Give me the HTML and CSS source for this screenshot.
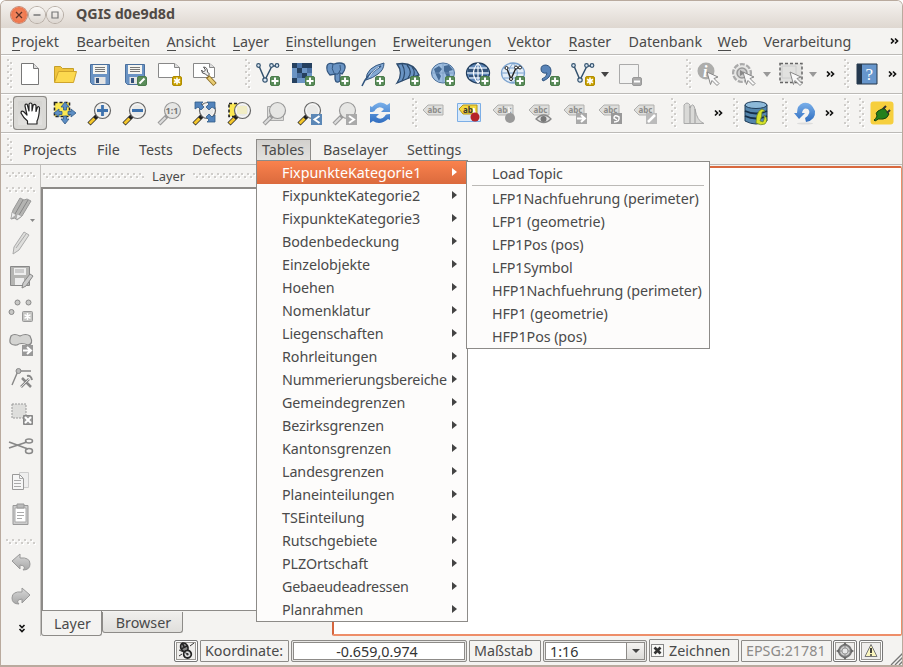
FILE: index.html
```html
<!DOCTYPE html>
<html lang="de">
<head>
<meta charset="utf-8">
<title>QGIS d0e9d8d</title>
<link rel="stylesheet" href="styles.css">
</head>
<body>
<svg class="defs" width="0" height="0" aria-hidden="true">
<defs>
<linearGradient id="gBlue" x1="0" y1="0" x2="0" y2="1"><stop offset="0" stop-color="#7ab0ea"/><stop offset="1" stop-color="#2f6dc0"/></linearGradient>
<linearGradient id="gGrey" x1="0" y1="0" x2="0" y2="1"><stop offset="0" stop-color="#d8d8d8"/><stop offset="1" stop-color="#a8a8a8"/></linearGradient>
<g id="plus"><rect x="14.500" y="14.500" width="9" height="9" rx="1.500" fill="#5a8c5a" stroke="#4a7c4a"/><path d="M19 15.500v7M15.500 19h7" stroke="#fff" stroke-width="2"/></g>
<g id="star"><rect x="14.500" y="14.500" width="9" height="9" rx="1.500" fill="#c9a100" stroke="#b08c00"/><path d="M19 15.500v7M16 17.300l6 3.400M22 17.300l-6 3.400" stroke="#fff" stroke-width="1.600"/></g>
<g id="floppy"><path d="M2.500 2.500h19v20h-17l-2-2z" fill="#6a93c4" stroke="#4a6f9c"/><rect x="5" y="3" width="14" height="9" fill="#f4f4f0"/><path d="M7 5.500h10M7 7.500h10M7 9.500h10" stroke="#777"/><rect x="6.500" y="15" width="11" height="7" fill="#e4e4e4"/><rect x="8" y="16" width="3" height="5" fill="#345078"/></g>
<g id="lens"><path d="M1 23l8-8" stroke="#222" stroke-width="4.500"/><path d="M1.500 22.500l5-5" stroke="#f4c62c" stroke-width="3"/><circle cx="14.500" cy="9.500" r="8" fill="#e9e9e7" stroke="#666" stroke-width="1.200"/><circle cx="14.500" cy="9.500" r="6.300" fill="none" stroke="#f8f8f8"/></g>
<g id="lensgrey"><path d="M1 23l8-8" stroke="#999" stroke-width="4.200"/><path d="M1.500 22.500l6-6" stroke="#ddd" stroke-width="2"/><circle cx="14.500" cy="9.500" r="8" fill="#e6e6e4" stroke="#999" stroke-width="1.200"/></g>
<g id="tag"><path d="M1 9l5-5h15v10h-15z" fill="#dededc" stroke="#b0b0ae"/><text x="5.500" y="12.400" class="tagtext">abc</text></g>
<g id="vee" fill="none" stroke="#34536f" stroke-width="1.500"><path d="M3 4l6 14 7-14h4"/><g fill="#dce8f4" stroke-width="1.200"><circle cx="2.500" cy="3.500" r="1.800"/><circle cx="9" cy="18" r="2.200"/><circle cx="15.500" cy="3.500" r="1.800"/><circle cx="21" cy="3.500" r="1.800"/></g></g>
<g id="cursor"><path d="M11 10l11 5-4 1.500 5 5-2 2-5-5-1.500 4z" fill="#f8f8f8" stroke="#888"/></g>
<g id="chev" fill="none" stroke="#111" stroke-width="1.700"><path d="M1 1.500l2.500 2.500-2.500 2.500M5 1.500l2.500 2.500-2.500 2.500"/></g>
</defs>
</svg>

<div class="window">
  <header class="titlebar">
    <span class="wbtn close"><svg width="16" height="16"><path d="M5 5l6 6M11 5l-6 6" stroke="#5e3226" stroke-width="1.300"/></svg></span>
    <span class="wbtn"><svg width="16" height="16"><path d="M4.500 8h7" stroke="#777" stroke-width="1.300"/></svg></span>
    <span class="wbtn"><svg width="16" height="16"><path d="M5 5h6v6h-6z" fill="none" stroke="#777" stroke-width="1.200"/></svg></span>
    <h1>QGIS d0e9d8d</h1>
  </header>

  <nav class="menubar">
    <span><u>P</u>rojekt</span><span><u>B</u>earbeiten</span><span><u>A</u>nsicht</span><span><u>L</u>ayer</span><span><u>E</u>instellungen</span><span><u>E</u>rweiterungen</span><span><u>V</u>ektor</span><span><u>R</u>aster</span><span>Datenbank</span><span><u>W</u>eb</span><span>Verarbeitung</span>
    <svg width="9" height="8"><use href="#chev"/></svg>
  </nav>

  <div class="toolbar">
    <i class="grip"></i>
    <div class="tools">
      <svg><path d="M3.500 1.500h12l5 5v16h-17z" fill="#fff" stroke="#777"/><path d="M15.500 1.500v5h5" fill="#ddd" stroke="#777"/></svg>
      <svg><path d="M1.500 20V4.500h6l2 2h11v4" fill="#f0c43c" stroke="#c59f28"/><path d="M1.500 20.500l4-11h18l-3 11z" fill="#fcd94f" stroke="#cfa42c"/></svg>
      <svg><use href="#floppy"/></svg>
      <svg><use href="#floppy"/><rect x="14.500" y="14.500" width="9" height="9" rx="1.500" fill="#5a8c5a" stroke="#4a7c4a"/><path d="M16.500 21.500l5-5" stroke="#fff" stroke-width="2"/></svg>
      <svg><path d="M.5 1.500h16l5 4v10h-21z" fill="#fff" stroke="#888"/><path d="M16.500 1.500v4h5" fill="#ddd" stroke="#888"/><use href="#star"/></svg>
      <svg><path d="M.5 1.500h16l5 4v10h-21z" fill="#fff" stroke="#888"/><path d="M16.500 1.500v4h5" fill="#ddd" stroke="#888"/><path d="M8.500 8q0 4 4 4l2 2 2-2-2-2q0-5-4-5l2 3-2 2z" fill="#eee" stroke="#555"/><path d="M14.500 14.500l7.500 8" stroke="#8a6c24" stroke-width="4.600"/><path d="M15.500 15.500l6 6.500" stroke="#e8cc74" stroke-width="2.800"/></svg>
    </div>
    <i class="grip g-add"></i>
    <div class="tools">
      <svg><use href="#vee"/><use href="#plus"/></svg>
      <svg><path d="M1 1h20v20H1z" fill="#6b94c4"/><path d="M1 1h5v5H1zM11 1h10v5H11zM6 6h5v5H6zM1 16h5v5H1zM11 11h5v5h-5z" fill="#25405f"/><path d="M6 1h5v5H6zM16 6h5v5h-5zM6 11h5v5H6z" fill="#4a71a3"/><use href="#plus"/></svg>
      <svg><path d="M1 4Q2 0 8 2q6-2 10 0 3 4-2 10l-2-1v8q-4 3-5-2v-5l-5 1Q0 9 1 4z" fill="#6a94c4" stroke="#33567f" stroke-width="1.300"/><path d="M7 2q-2 5 1 9M14 3q2 5-2 9h-4" fill="none" stroke="#33567f"/><use href="#plus"/></svg>
      <svg><path d="M5 18Q5 5 23 1q0 7-6 11-5 4-12 6z" fill="#84a9d4" stroke="#33567f"/><path d="M1 24Q5 13 20 4" fill="none" stroke="#33567f" stroke-width="1.500"/><path d="M8 15q3-6 10-10" stroke="#dbe7f4" fill="none"/><use href="#plus"/></svg>
      <svg><path d="M1 2q16-3 22 11l-10 3-12 5q7-10 0-19z" fill="#6a94c4" stroke="#2c4a6c" stroke-width="1.300"/><path d="M6 2q5 9 0 17M11 3q6 7 1 13M16 5q4 5 1 10" fill="none" stroke="#2c4a6c" stroke-width="1.200"/><use href="#plus"/></svg>
      <svg><ellipse cx="12" cy="11" rx="11.500" ry="10" fill="#9dbddf" stroke="#4c719c"/><path d="M3 7l5-3 3 3-3 4 2 3-2 5-3-6zM13 4l5-1 4 5-4 1 1 5-3 1-3-6z" fill="#456b96"/><path d="M1 11h22M12 1v20" stroke="#7295bd" stroke-width=".7"/><use href="#plus"/></svg>
      <svg><ellipse cx="12" cy="11" rx="11.500" ry="10" fill="#5d87b8" stroke="#233f5f" stroke-width="1.300"/><path d="M2 7h20v3H2zM3 13h18v2H3z" fill="#233f5f" opacity=".7"/><path d="M1 11h22M3 6h18M3 16h18M12 1v20M12 1q-9 10 0 20M12 1q9 10 0 20" fill="none" stroke="#fff" stroke-width="1.100"/><use href="#plus"/></svg>
      <svg><ellipse cx="12" cy="11" rx="11.500" ry="10" fill="#e3edf7" stroke="#7ca3cf" stroke-width="1.300"/><path d="M1 11h22M3 6h18M3 16h18M12 1q-9 10 0 20M12 1q9 10 0 20" fill="none" stroke="#7ca3cf"/><path d="M6 7l4 10 5-11h4" fill="none" stroke="#222" stroke-width="1.400"/><g fill="#fff" stroke="#222"><circle cx="5.500" cy="6" r="1.500"/><circle cx="10" cy="17" r="1.500"/><circle cx="15" cy="5.500" r="1.500"/><circle cx="19" cy="5.500" r="1.500"/></g><use href="#plus"/></svg>
      <svg><path d="M6 17q5-2 5-6-6 1-6-4 0-4 5-4 5 1 5 6 0 7-8 10z" fill="#5984b8" stroke="#2f5480"/><use href="#plus"/></svg>
      <svg><use href="#vee"/><use href="#star"/></svg>
    </div>
    <b class="drop d-vector"></b>
    <svg class="t-remove"><path d="M1.500 2.500h19v19h-19z" fill="#f3f3f2" stroke="#aaa"/><rect x="14.500" y="15.500" width="9" height="8" rx="1.500" fill="#aaa" stroke="#999"/><path d="M16 19.500h6" stroke="#fff" stroke-width="2"/></svg>
    <i class="grip g-info"></i>
    <div class="tools info-tools">
      <svg><circle cx="10" cy="9" r="8.500" fill="#adadab"/><text x="7" y="15" class="info">i</text><use href="#cursor"/></svg>
      <svg><circle cx="10" cy="11" r="8.800" fill="#eee" stroke="#aaa" stroke-width="2.500" stroke-dasharray="5 1.500"/><circle cx="10" cy="11" r="7.600" fill="#e6e6e4"/><circle cx="10" cy="11" r="5" fill="#ccc" stroke="#999" stroke-width="1.500"/><path d="M8 8l5 3-5 3z" fill="#888"/><use href="#cursor"/></svg>
    </div>
    <b class="drop grey d-action"></b>
    <svg class="t-select"><path d="M1 1.500h22v19H1z" fill="#e1e1df" stroke="#666" stroke-width="1.500" stroke-dasharray="3 2"/><path d="M3 4h14v12H3z" fill="none" stroke="#ccc"/><use href="#cursor"/></svg>
    <b class="drop grey d-select"></b>
    <svg class="more m-1"><use href="#chev"/></svg>
    <i class="grip g-help"></i>
    <svg class="t-help"><path d="M2 2h20v20H2z" fill="#6796cc" stroke="#25364a"/><path d="M2 2h5v20H2z" fill="#24384e"/><text x="10.500" y="17.500" class="question">?</text></svg>
    <svg class="more m-2"><use href="#chev"/></svg>
  </div>

  <div class="toolbar">
    <i class="grip"></i>
    <div class="tools">
      <svg class="pressed" viewBox="0 0 24 24"><path d="M9.500 23v-3q-4-3-6.500-8 0-2.500 2.500-1.500L9 14 7 5q0-2.500 2.200-1.700L11 10V3q1.500-2 3 0v7l1.200-6q1.800-1.500 2.800.5v6L19.500 6q2-1 2 1.500-.5 9-2.500 12.500V23z" fill="#fff" stroke="#222" stroke-width="1.200" stroke-linejoin="round"/></svg>
      <svg><path d="M1.500 1.500h15v14h-15z" fill="#fbe851" stroke="#222" stroke-width="1.600" stroke-dasharray="3 2"/><path d="M12 1l4 5h-2.500v3h-3V6H8zM12 23l4-5h-2.500v-3h-3v3H8zM1 12l5-4v2.500h3v3H6V16zM23 12l-5-4v2.500h-3v3h3V16z" fill="#5d8ec4" stroke="#315a87" stroke-width=".8"/></svg>
      <svg><use href="#lens"/><path d="M14.500 4v11M9 9.500h11" stroke="#3d72ae" stroke-width="2.800"/></svg>
      <svg><use href="#lens"/><path d="M9 9.500h11" stroke="#3d72ae" stroke-width="2.800"/></svg>
      <svg><use href="#lensgrey"/><text x="7.500" y="13" class="ratio">1:1</text></svg>
      <svg><use href="#lens"/><path d="M2 1h8L8 3l3 3-3 3-3-3-3 2zM22 1h-8l2 2-3 3 3 3 3-3 3 2zM22 21h-8l2-2-3-3 3-3 3 3 3-2z" fill="#5384bc" stroke="#315a87" stroke-width=".8"/></svg>
      <svg><path d="M1 2.500h14v13H1z" fill="#fbe851" stroke="#222" stroke-width="1.600" stroke-dasharray="3 2"/><use href="#lens"/><path d="M9 5h10v8H9z" fill="#f3edbd" opacity=".8"/></svg>
      <svg><path d="M4.500 5.500h16v14h-16z" fill="#dededc" stroke="#aaa"/><use href="#lensgrey"/></svg>
      <svg><use href="#lens"/><path d="M13 13h11v11H13z" fill="#5c88b7"/><path d="M21.500 15l-5 3.500 5 3.500" stroke="#fff" stroke-width="2" fill="none"/></svg>
      <svg><use href="#lensgrey"/><path d="M13 13h11v11H13z" fill="#aaa"/><path d="M16 15l5 3.500-5 3.500" stroke="#fff" stroke-width="2" fill="none"/></svg>
      <svg><path d="M2 11V5l2 1q8-8 15-2l3-2v9h-9l3-3q-5-4-9 1 0 2-5 2zM22 13v6l-2-1q-8 7-15 2l-3 2v-9h9l-3 3q5 4 9-1 0-2 5-2z" fill="url(#gBlue)"/></svg>
    </div>
    <i class="grip g-label"></i>
    <div class="tools label-tools">
      <svg><use href="#tag"/></svg>
      <svg><path d="M.5 2.500h23v18H.5z" fill="#d8e9fa" stroke="#7caee6"/><path d="M2 8l4-4h14v9H6z" fill="#f5d83c" stroke="#b2951d"/><text x="6" y="11.500" class="tagtext dark">ab</text><path d="M16 12V7q2-1 2 2l1 4z" fill="#fff"/><circle cx="18" cy="16" r="4.500" fill="#b5252a"/></svg>
      <svg><use href="#tag"/><path d="M16 13V6q3-1 2 7z" fill="#f4f4f4"/><circle cx="18" cy="17" r="5" fill="#999"/></svg>
      <svg><use href="#tag"/><path d="M8 18q8-8 15 0-7 7-15 0z" fill="#e4e4e4" stroke="#888" stroke-width="1.300"/><circle cx="15.500" cy="18" r="3" fill="#777"/></svg>
      <svg><use href="#tag"/><path d="M13 12h11v11H13z" fill="#aaa"/><path d="M14 17.500h7M18 14l4 3.500-4 3.500" fill="none" stroke="#fff" stroke-width="2"/></svg>
      <svg><use href="#tag"/><path d="M13 12h11v11H13z" fill="#999"/><path d="M16 21q6 0 5-5-5-3-5 1l3 2" fill="none" stroke="#fff" stroke-width="1.500"/></svg>
      <svg><use href="#tag"/><path d="M13 12h11v11H13z" fill="#bbb"/><path d="M15 21l7-7" fill="none" stroke="#fff" stroke-width="2.500"/></svg>
    </div>
    <i class="grip g-hist"></i>
    <svg class="t-hist"><path d="M2 22.500V4q3-4 6 0v3q3-7 5 1 2 12 9 14.500z" fill="#d9d9d7" stroke="#aaa"/><path d="M8 22V5M13 22V8" stroke="#999"/></svg>
    <svg class="more m-3"><use href="#chev"/></svg>
    <i class="grip g-db"></i>
    <svg class="t-db"><path d="M1 4v16q11 6 22 0V4z" fill="#5586ad" stroke="#1f3c59"/><ellipse cx="12" cy="4" rx="11" ry="3.500" fill="#8db9d9" stroke="#1f3c59"/><path d="M1 10q11 5 22 0M1 15q11 5 22 0" fill="none" stroke="#152f49" stroke-width="1.800"/><path d="M12 22q0-8 3-12l3-2 3 2-3 1q0 5-2 9l3 1q2-3 1-7 5 4 1 9-4 2-9-1z" fill="#d7e22a" stroke="#658022" stroke-width=".7"/></svg>
    <i class="grip g-undo"></i>
    <svg class="t-undo"><path d="M1 12l5 6 6-6H9q1-6 6-4 4 4-3 9l1 4q10-2 9-11Q18 0 10 2 4 4 4 12z" fill="url(#gBlue)"/><ellipse cx="12" cy="22.500" rx="8" ry="1" fill="#ddd"/></svg>
    <svg class="more m-4"><use href="#chev"/></svg>
    <i class="grip g-a"></i><i class="grip g-b"></i>
    <svg class="t-plug"><rect x=".5" y=".5" width="23" height="23" rx="3" fill="#f6cf3e"/><path d="M4 19q2-1 3-4-2-3 1-5l6-3 5 6q-2 5-6 5-5-1-8 2z" fill="#23801c" stroke="#12420e"/><path d="M13 8l3-3M17 12l3-3" stroke="#333" stroke-width="2"/></svg>
  </div>

  <nav class="pluginbar">
    <i class="grip"></i>
    <span>Projects</span><span>File</span><span>Tests</span><span>Defects</span><span class="open">Tables</span><span>Baselayer</span><span>Settings</span>
  </nav>

  <main>
    <aside>
      <i class="hgrip"></i><i class="hgrip second"></i>
      <div class="vtools">
        <svg><path d="M2 22l2-9L11 1l4 2 3-1 4 2-9 15-5 4-2-2z" fill="#b4b4b2" stroke="#999"/><path d="M6 17L14 3M10 18L19 3" stroke="#888"/><path d="M2 22l1-7 4 3zM7 23l1-6 5 2z" fill="#eee" stroke="#999" stroke-width=".6"/><path d="M21 22h5l-2.500 3z" fill="#888"/></svg>
        <svg><path d="M4 23l1-7L15 1l5 3L10 19z" fill="#dededc" stroke="#aaa"/><path d="M7 17L17 3" stroke="#aaa"/></svg>
        <svg><path d="M1.500 1.500h19v19h-19z" fill="#b5b5b3" stroke="#888"/><path d="M5 3h12v7H5zM6 13h9v7H6z" fill="#eee"/><path d="M6 5h9M6 7h9" stroke="#aaa"/><path d="M13 23l1-5 7-9 3 2-7 10z" fill="#ccc" stroke="#888"/></svg>
        <svg><g fill="#c8c8c6" stroke="#888"><circle cx="8.500" cy="3.500" r="2.500"/><circle cx="19.500" cy="3.500" r="2.500"/><circle cx="2.500" cy="13" r="2.500"/></g><rect x="13.500" y="12.500" width="10" height="10" rx="1" fill="#c4c4c2" stroke="#999"/><path d="M18.500 14v7M15.500 15.700l6 3.600M21.500 15.700l-6 3.600" stroke="#fff" stroke-width="1.500"/></svg>
        <svg><path d="M2 3q3-3 9 0 6-3 10 0 4 8-2 9-7-3-11 0-10 1-6-9z" fill="#d4d4d2" stroke="#888" stroke-width="1.200"/><path d="M13 12h11v11H13z" fill="#999"/><path d="M14 17.500h7M18 14l4 3.500-4 3.500" fill="none" stroke="#fff" stroke-width="2"/></svg>
        <svg><path d="M3 18L9 4h13" fill="none" stroke="#888" stroke-width="1.400"/><circle cx="9.500" cy="4" r="2.500" fill="#bbb" stroke="#888"/><path d="M12 20l8-8M13 11l9 9" stroke="#888" stroke-width="2.500"/><path d="M12 20l8-8" stroke="#ddd"/><path d="M18 9q4-1 5 4" stroke="#888" stroke-width="2" fill="none"/></svg>
        <svg><path d="M3 3h14v14H3z" fill="#dededc" stroke="#999" stroke-dasharray="2 1"/><path d="M14.500 14.500h9v9h-9z" fill="#999" stroke="#888"/><path d="M16 16l6 6M22 16l-6 6" stroke="#fff" stroke-width="2"/></svg>
        <svg><path d="M0 7l19 7M0 13l18-6" stroke="#888" stroke-width="1.700"/><g fill="none" stroke="#888" stroke-width="1.500"><ellipse cx="20" cy="6" rx="3.500" ry="2"/><ellipse cx="20" cy="16" rx="3.500" ry="2.500"/></g></svg>
        <svg><path d="M10.500 3.500h9v15h-9z" fill="#eee" stroke="#ccc"/><path d="M3.500 5.500h7l4 4v11h-11z" fill="#f6f6f6" stroke="#999"/><path d="M10.500 5.500v4h4M5 11.500h7M5 14.500h7M5 17.500h7" fill="none" stroke="#aaa"/></svg>
        <svg><path d="M4 2.500h15v19H4z" fill="#ccc" stroke="#999"/><path d="M6 5h11v14H6z" fill="#fff" stroke="#aaa"/><path d="M8 1h7v4H8z" fill="#bbb" stroke="#999"/><path d="M8 9.500h7M8 12.500h7M8 15.500h5" stroke="#aaa"/></svg>
      </div>
      <i class="hgrip third"></i>
      <div class="vtools history">
        <svg><path d="M3 10l8-7v4q10-1 10 6 0 6-7 6 4-4-3-5v4z" fill="url(#gGrey)" stroke="#999"/></svg>
        <svg><path d="M21 10l-8-7v4Q3 6 3 13q0 6 7 6-4-4 3-5v4z" fill="url(#gGrey)" stroke="#999"/></svg>
      </div>
      <svg class="down" viewBox="0 0 8 9"><path d="M1.500 1l2.500 2.500L6.500 1M1.500 5l2.500 2.500L6.500 5" fill="none" stroke="#111" stroke-width="1.600"/></svg>
    </aside>
    <section class="dock">
      <header><i class="hgrip"></i><h2>Layer</h2><i class="hgrip"></i></header>
      <div class="tree"></div>
      <div class="tabs"><span class="active">Layer</span><span>Browser</span></div>
    </section>
    <section class="canvas"></section>
  </main>

  <footer>
    <span class="sbtn mouse"><svg width="20" height="19"><g transform="rotate(-25 10 10)"><ellipse cx="10" cy="6" rx="3.500" ry="4.500" fill="#888" stroke="#222" stroke-width="1.700"/><path d="M6 6h8M10 1v5" stroke="#222" stroke-width="1.500"/><circle cx="10" cy="13.500" r="3.800" fill="#ddd" stroke="#222" stroke-width="1.800"/><circle cx="10" cy="13.500" r="1.200" fill="#333"/></g><path d="M3 9l9 4M14 5l4-3M3 15l3-2" stroke="#333"/></svg></span>
    <span class="box coord">Koordinate:</span>
    <span class="field value">-0.659,0.974</span>
    <span class="box scale">Maßstab</span>
    <span class="field combo">1:16<em><b class="drop"></b></em></span>
    <span class="box render"><svg width="13" height="13"><rect x=".5" y=".5" width="12" height="12" fill="#f8f8f6" stroke="#888"/><path d="M3.500 3.500l6 6M9.500 3.500l-6 6" stroke="#333" stroke-width="2.700"/></svg>Zeichnen</span>
    <span class="box epsg">EPSG:21781</span>
    <span class="sbtn crs"><svg width="18" height="18"><circle cx="9" cy="9" r="6" fill="#ccc" stroke="#777" stroke-width="2"/><path d="M9 2v14M2 9h14" stroke="#888"/><circle cx="9" cy="9" r="3" fill="#e8e8e8" stroke="#999"/><path d="M9 0l2 3H7zM9 18l2-3H7zM0 9l3-2v4zM18 9l-3-2v4z" fill="#666"/></svg></span>
    <span class="sbtn warn"><svg width="18" height="18"><path d="M9 2.500l6 12H3z" fill="#fbf6bd" stroke="#777" stroke-linejoin="round"/><path d="M9 6v5M9 12.200v1.500" stroke="#222" stroke-width="1.700"/></svg></span>
    <svg class="size" width="13" height="13"><path d="M1 13L13 1M5 13l8-8M9 13l4-4" stroke="#777" stroke-width="1.300"/></svg>
  </footer>
</div>

<ul class="menu tables">
  <li class="hot">FixpunkteKategorie1</li><li>FixpunkteKategorie2</li><li>FixpunkteKategorie3</li><li>Bodenbedeckung</li><li>Einzelobjekte</li><li>Hoehen</li><li>Nomenklatur</li><li>Liegenschaften</li><li>Rohrleitungen</li><li class="tight">Nummerierungsbereiche</li><li>Gemeindegrenzen</li><li>Bezirksgrenzen</li><li>Kantonsgrenzen</li><li>Landesgrenzen</li><li>Planeinteilungen</li><li>TSEinteilung</li><li>Rutschgebiete</li><li>PLZOrtschaft</li><li class="tight">Gebaeudeadressen</li><li>Planrahmen</li>
</ul>
<ul class="menu topic">
  <li>Load Topic</li><li class="sep"></li><li>LFP1Nachfuehrung (perimeter)</li><li>LFP1 (geometrie)</li><li>LFP1Pos (pos)</li><li>LFP1Symbol</li><li>HFP1Nachfuehrung (perimeter)</li><li>HFP1 (geometrie)</li><li>HFP1Pos (pos)</li>
</ul>
</body>
</html>
```
FILE: styles.css
```css
* { box-sizing: border-box; }
body { margin: 0; width: 903px; height: 667px; overflow: hidden; position: relative; background: #fff; font: 14.300px/23px "Noto Sans", sans-serif; color: #4a4a4a; }
.defs { position: absolute; }
svg { display: block; flex: none; }
.window { width: 903px; height: 667px; display: flex; flex-direction: column; background: #f4f3f1; border: solid #b9aa9e; border-width: 1px 1px 2px; border-radius: 6px 6px 0 0; overflow: hidden; }

.titlebar { height: 27px; flex: none; display: flex; align-items: center; gap: 2px; padding-left: 10px; background: linear-gradient(#f5f2ef, #ded7d0); }
.wbtn { width: 16px; height: 16px; border-radius: 50%; background: linear-gradient(#faf8f6, #dcd6d0); box-shadow: 0 0 0 1px #b5aca4; }
.wbtn.close { background: radial-gradient(#f58f68, #e9683d); box-shadow: 0 0 0 1px #c08672; }
.titlebar h1 { margin: 0 0 2px 11px; font-size: 14.300px; font-weight: 700; color: #504a45; }

.menubar { height: 26px; flex: none; display: grid; grid-template-columns: 65px 90px 66px 53px 107px 115px 61px 60px 89px 46px 126px 9px; padding-left: 10.500px; align-items: center; white-space: nowrap; letter-spacing: -.03px; }
u { text-decoration: none; border-bottom: 1px solid #4a4a4a; display: inline-block; line-height: 16px; }

.toolbar { height: 39px; flex: none; display: flex; align-items: center; border-top: 1px solid #bcbab7; box-shadow: inset 0 1px #fff; padding-left: 6px; }
.toolbar svg { width: 24px; height: 24px; overflow: visible; }
.tools { display: flex; gap: 11px; }
.grip { width: 6px; height: 30px; margin-right: 5px; flex: none; background: conic-gradient(at 2px 2px, transparent 75%, #cfcdca 0) 0 0 / 6px 6px, conic-gradient(at 2px 2px, transparent 75%, #cfcdca 0) 3px 3px / 6px 6px, conic-gradient(at 2px 2px, transparent 75%, #fff 0) 1px 1px / 6px 6px, conic-gradient(at 2px 2px, transparent 75%, #fff 0) 4px 4px / 6px 6px; }
.toolbar .tools + .grip { margin-left: 28px; }
.drop { width: 0; height: 0; flex: none; border: solid transparent; border-width: 5px 4.500px 0; border-top-color: #444; }
.drop.grey { border-top-color: #999; }
.d-vector { margin-left: 6px; }
.t-remove { margin-left: 9px; }
.g-info { margin-left: 44px; margin-right: 4px; }
.info-tools { gap: 12px; }
.d-action { margin-left: 7px; }
.t-select { margin-left: 8px; }
.d-select { margin-left: 6px; }
.toolbar .more { width: 9px; height: 8px; }
.m-1 { margin-left: 9px; }
.g-help { margin-left: 9px; margin-right: 5px; }
.m-2 { margin-left: 9px; }
.pressed { background: linear-gradient(#d4d3d0, #e2e1df); box-shadow: 0 0 0 4px #dad9d6, 0 0 0 5px #8d8b88; border-radius: 1px; }
.toolbar .tools + .g-label { margin-left: 20px; margin-right: 4px; }
.label-tools { gap: 11.200px; }
.toolbar .tools + .g-hist { margin-left: 14px; }
.m-3 { margin-left: 8px; }
.g-db { margin-left: 10px; }
.g-undo { margin-left: 14px; }
.m-4 { margin-left: 8px; }
.g-a { margin-left: 10px; margin-right: 9px; }

.tagtext { font: bold 8px "Noto Sans", sans-serif; fill: #8c8c8a; }
.tagtext.dark { fill: #333; }
.ratio { font: bold 9px "Noto Sans", sans-serif; fill: #777; }
.info { font: italic bold 16px "Liberation Serif", serif; fill: #fff; }
.question { font: 17px "Liberation Serif", serif; fill: #fff; }

.pluginbar { height: 32px; flex: none; display: flex; align-items: center; border-top: 1px solid #bcbab7; box-shadow: inset 0 1px #fff; padding: 2px 0 0 6px; }
.pluginbar .grip { height: 24px; margin-right: 4px; }
.pluginbar span { padding: 0 6px; height: 22px; line-height: 22px; white-space: nowrap; flex: none; }
.pluginbar span:nth-of-type(1) { width: 74px; }
.pluginbar span:nth-of-type(2) { width: 42px; }
.pluginbar span:nth-of-type(3) { width: 53px; }
.pluginbar span:nth-of-type(4) { width: 70px; }
.pluginbar .open { width: 55px; margin-right: 6px; padding: 0 5px; background: linear-gradient(#d2d0cd, #e3e2df); border: 1px solid #8d8b88; line-height: 20px; }
.pluginbar span:nth-of-type(6) { width: 84px; }

main { flex: 1; display: flex; min-height: 0; border-top: 1px solid #bcbab7; }
aside { width: 40px; flex: none; padding: 7px 0 0 5px; border-right: 1px solid #c2c0bd; }
.hgrip { display: block; height: 6px; width: 30px; background: conic-gradient(at 2px 2px, transparent 75%, #cfcdca 0) 0 0 / 6px 6px, conic-gradient(at 2px 2px, transparent 75%, #cfcdca 0) 3px 3px / 6px 6px, conic-gradient(at 2px 2px, transparent 75%, #fff 0) 1px 1px / 6px 6px, conic-gradient(at 2px 2px, transparent 75%, #fff 0) 4px 4px / 6px 6px; }
.second { margin-top: 9px; }
.vtools { display: flex; flex-direction: column; gap: 10px; margin: 4px 0 0 3px; }
.vtools svg { width: 24px; height: 24px; overflow: visible; }
.third { margin-top: 12px; }
.history { margin-top: 6px; }
.down { width: 8px; height: 9px; margin: 15px 0 0 12px; }
.dock { width: 291px; flex: none; display: flex; flex-direction: column; padding-right: 3px; }
.dock header { height: 22px; display: flex; align-items: center; gap: 8px; padding: 0 2px; }
.dock header .hgrip { width: 101px; flex: none; }
.dock header .hgrip:last-child { width: 140px; flex: 1; }
.dock h2 { margin: 0; font-size: 12.900px; font-weight: 400; }
.tree { height: 424px; background: #fff; border: solid #8d8b88; border-width: 2px 1px 1px 2px; }
.tabs { display: flex; align-items: flex-start; }
.tabs span { height: 21px; line-height: 21px; border: 1px solid #8d8b88; border-top: 0; border-radius: 0 0 3px 3px; background: linear-gradient(#f0efed, #e0dfdc); width: 81px; padding-left: 2px; text-align: center; margin-top: 1px; }
.tabs .active { width: 61px; height: 25px; line-height: 25px; background: #f4f3f1; margin-top: 0; }
.canvas { flex: 1; background: #fff; border: 2px solid #ee8e69; border-left-color: #d5653d; border-right-width: 1px; border-top-color: #d9693f; margin: 1px 0 0; border-radius: 2px; height: 470px; }

footer { height: 29px; flex: none; display: flex; align-items: center; padding-left: 173px; }
footer > * { flex: none; }
.box { height: 22px; border: 1px solid #8d8b88; line-height: 19px; white-space: nowrap; padding-left: 4px; border-radius: 1px; }
.sbtn { width: 24px; height: 22px; border: 1px solid #777; box-shadow: inset 0 0 0 1px #fff, inset 0 0 0 2px #9a9894; display: flex; align-items: center; justify-content: center; border-radius: 2px; background: #efeeec; }
.coord { width: 89px; margin-left: 2px; }
.field { height: 22px; border: 1px solid #8d8b88; box-shadow: inset 0 0 0 1px #e9e8e6, inset 0 0 0 2px #8d8b88; background: #fff; border-radius: 2px; line-height: 21px; color: #333; }
.value { width: 176px; margin-left: 2px; text-align: center; padding-right: 4px; }
.scale { width: 72px; margin-left: 2px; }
.combo { width: 104px; margin-left: 2px; padding-left: 6px; display: flex; justify-content: space-between; }
.combo em { width: 18px; border-left: 1px solid #8d8b88; margin: 2px; background: linear-gradient(#f5f4f2, #dddcd9); display: flex; align-items: center; justify-content: center; }
.combo .drop { border-width: 4px 4px 0; }
.render { width: 90px; margin-left: 2px; display: flex; align-items: center; padding-left: 1px; gap: 5px; height: 23px; }
.epsg { width: 91px; margin-left: 2px; color: #8c8a88; }
.crs { margin-left: 1px; }
.warn { margin-left: 2px; }
.size { margin: auto 0 0 7px; }

.menu { position: absolute; margin: 0; padding: 0; list-style: none; background: #fdfcfb; border: 1px solid #8d8b88; letter-spacing: -.07px; }
.menu li { height: 23px; padding-left: 25px; white-space: nowrap; }
.tables { left: 256px; top: 160px; width: 212px; height: 462px; }
.tables li { display: flex; align-items: center; justify-content: space-between; padding-right: 10px; }
.tables li.tight { letter-spacing: -.22px; }
.tables li::after { content: ""; border: solid transparent; border-width: 4px 0 4px 5px; border-left-color: #444; margin-top: -2px; }
.tables .hot { background: linear-gradient(#fa824d, #db6a3d); color: #fff; letter-spacing: 0; }
.tables .hot::after { border-left-color: #fff; }
.topic { left: 466px; top: 161px; width: 244px; height: 188px; }
.topic .sep { height: 1px; margin: 0 5px 1px; padding: 0; background: #bbb9b6; }
```
